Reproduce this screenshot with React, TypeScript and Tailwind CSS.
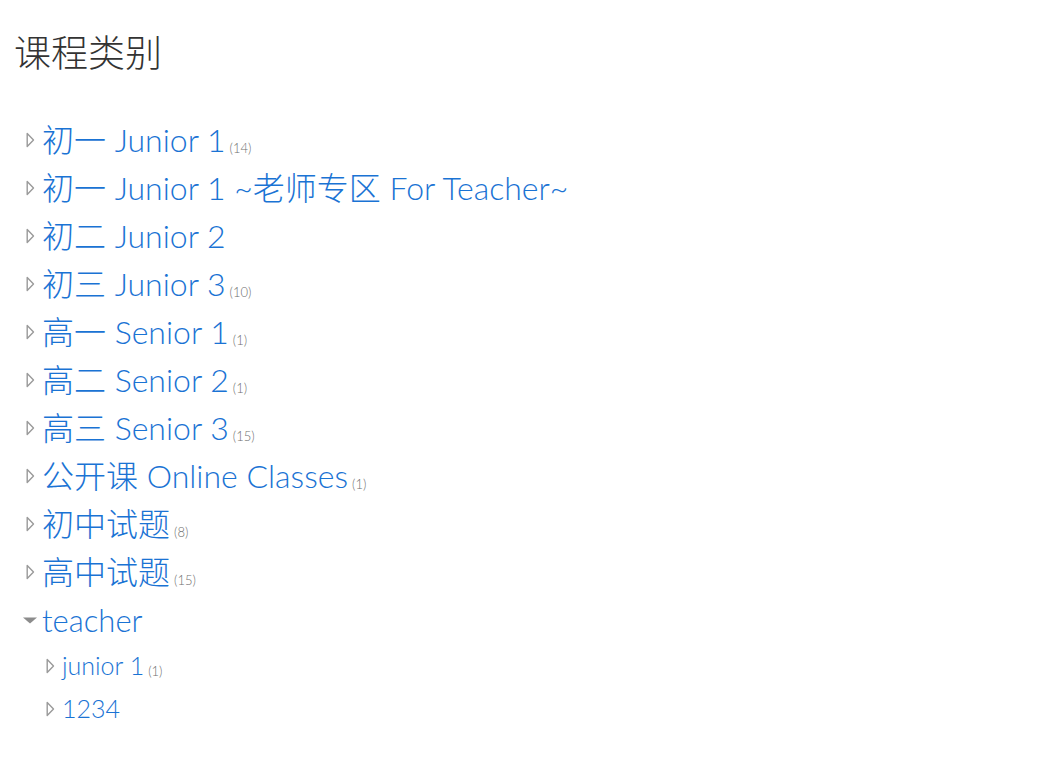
import React from 'react';

type Cat = { name: string; count?: number; expanded?: boolean; children?: Cat[] };

const categories: Cat[] = [
  { name: '初一 Junior 1', count: 14 },
  { name: '初一 Junior 1 ~老师专区 For Teacher~' },
  { name: '初二 Junior 2' },
  { name: '初三 Junior 3', count: 10 },
  { name: '高一 Senior 1', count: 1 },
  { name: '高二 Senior 2', count: 1 },
  { name: '高三 Senior 3', count: 15 },
  { name: '公开课 Online Classes', count: 1 },
  { name: '初中试题', count: 8 },
  { name: '高中试题', count: 15 },
  {
    name: 'teacher',
    expanded: true,
    children: [{ name: 'junior 1', count: 1 }, { name: '1234' }],
  },
];

const Collapsed = () => (
  <svg width="9" height="16" viewBox="0 0 9 16" className="shrink-0">
    <path d="M1.2 1.5 L7.5 8 L1.2 14.5 Z" fill="none" stroke="#9a9a9a" strokeWidth="1.4" strokeLinejoin="round" />
  </svg>
);

const Expanded = () => (
  <svg width="14" height="7" viewBox="0 0 14 7" className="shrink-0">
    <path d="M0 0.5 L14 0.5 L7 6.5 Z" fill="#8c8c8c" />
  </svg>
);

const Count = ({ n }: { n?: number }) =>
  n === undefined ? null : <span className="text-[13px] text-[#6f6f6f] ml-[4px] self-end mb-[6px]">({n})</span>;

export default function App() {
  return (
    <div
      className="min-h-screen bg-white pl-[16px] pt-[27px] font-light"
      style={{ fontFamily: '"Lato", "Noto Sans CJK SC", sans-serif' }}
    >
      <h2 className="text-[37px] leading-[52px] text-[#333] font-light -ml-[2px]">课程类别</h2>
      <ul className="mt-[37px]">
        {categories.map((c) => (
          <li key={c.name}>
            <div className="flex items-center h-[48px]">
              <div className="w-[26px] flex justify-center pl-[2px]">
                {c.expanded ? <Expanded /> : <Collapsed />}
              </div>
              <span className={`${c.expanded ? 'text-[31px]' : 'text-[32px]'} text-[#1a73d4] whitespace-nowrap leading-none`}>
                {c.name}
              </span>
              <Count n={c.count} />
            </div>
            {c.children && (
              <ul className="pl-[20px]">
                {c.children.map((k) => (
                  <li key={k.name} className="flex items-center h-[43px]">
                    <div className="w-[26px] flex justify-center pl-[2px]">
                      <Collapsed />
                    </div>
                    <span className="text-[25px] text-[#1a73d4] leading-none">{k.name}</span>
                    <Count n={k.count} />
                  </li>
                ))}
              </ul>
            )}
          </li>
        ))}
      </ul>
    </div>
  );
}
